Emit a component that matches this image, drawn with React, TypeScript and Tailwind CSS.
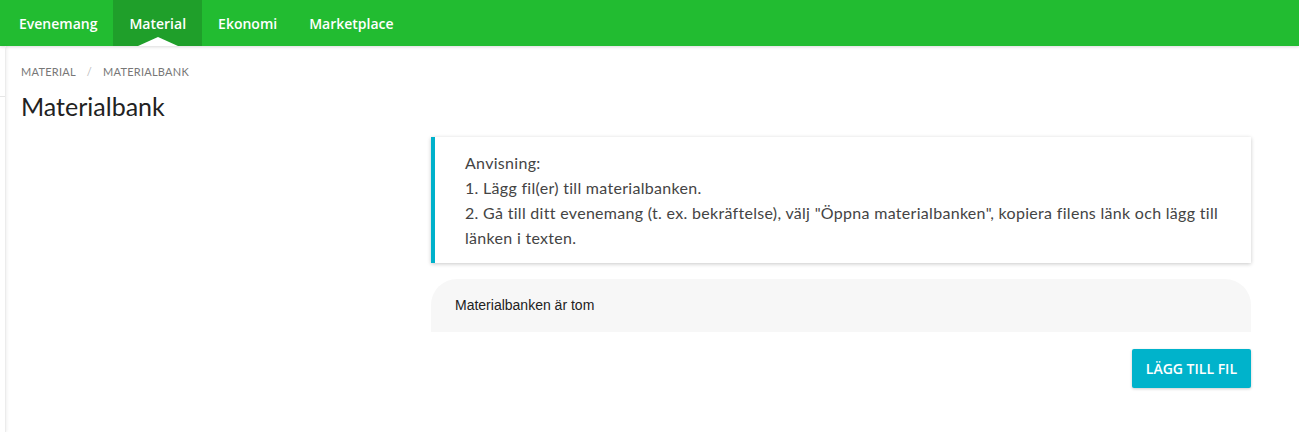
import React from 'react';

const tabs = ['Evenemang', 'Material', 'Ekonomi', 'Marketplace'];

const App: React.FC = () => {
  return (
    <div className="min-h-[432px] bg-white font-['Lato',sans-serif] text-[#333]">
      <nav className="flex h-[46px] bg-[#22bc31] pl-[3px] shadow-[0_1px_3px_rgba(0,0,0,0.15)]">
        {tabs.map((t) => (
          <div
            key={t}
            className={`relative flex items-center px-4 font-['Open_Sans',sans-serif] text-[14px] font-semibold text-white ${
              t === 'Material' ? 'bg-[#1f9f2a]' : ''
            }`}
          >
            {t}
            {t === 'Material' && (
              <span className="absolute bottom-0 left-1/2 h-0 w-0 -translate-x-1/2 border-x-[20px] border-b-[9px] border-x-transparent border-b-white" />
            )}
          </div>
        ))}
      </nav>

      <div className="flex min-h-[386px]">
        {/* collapsed sidebar */}
        <div className="w-[6px] shrink-0 border-r border-[#ececec] shadow-[1px_0_3px_rgba(0,0,0,0.06)]">
          <div className="mt-[50px] border-b border-[#e6e6e6]" />
        </div>

        <main className="flex-1 pl-[15px] pr-[48px]">
          <div className="mt-[18px] flex items-center text-[11px] uppercase tracking-[0.25px] text-[#777]">
            <span>Material</span>
            <span className="mx-[11px] text-[#bbb]">/</span>
            <span>Materialbank</span>
          </div>
          <h1 className="mt-[13px] text-[25px] font-normal leading-none text-[#222]">Materialbank</h1>

          <div className="mt-[18px] flex">
            <div className="w-[410px] shrink-0" />
            <div className="flex-1">
              <div className="border-l-4 border-[#00b1cb] bg-white py-[13px] pl-[30px] pr-[30px] text-[16px] leading-[25px] tracking-[0.3px] text-[#444] shadow-[0_1px_4px_rgba(0,0,0,0.22)]">
                <div>Anvisning:</div>
                <div>1. Lägg fil(er) till materialbanken.</div>
                <div className="whitespace-nowrap">
                  2. Gå till ditt evenemang (t. ex. bekräftelse), välj "Öppna materialbanken", kopiera filens länk och lägg till
                  <br />
                  länken i texten.
                </div>
              </div>

              <div className="mt-[16px] flex h-[53px] items-center rounded-t-[26px] bg-[#f7f7f7] px-[24px] font-['Liberation_Sans',sans-serif] text-[14px] text-[#222]">
                Materialbanken är tom
              </div>

              <div className="mt-[17px] flex justify-end">
                <button className="h-[39px] rounded-[2px] bg-[#00b3cb] px-[14px] font-['Open_Sans',sans-serif] text-[14px] font-semibold uppercase text-white shadow-[0_1px_3px_rgba(0,0,0,0.2)]">
                  Lägg till fil
                </button>
              </div>
            </div>
          </div>
        </main>
      </div>
    </div>
  );
};

export default App;
